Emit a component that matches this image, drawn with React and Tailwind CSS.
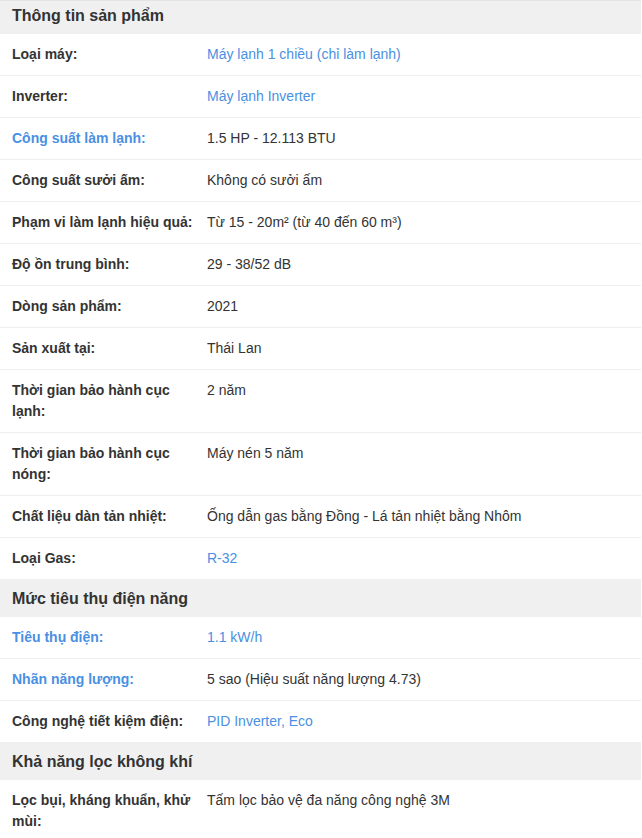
const sections = [
  {
    title: "Thông tin sản phẩm",
    first: true,
    rows: [
      { label: "Loại máy:", value: "Máy lạnh 1 chiều (chỉ làm lạnh)", valueLink: true },
      { label: "Inverter:", value: "Máy lạnh Inverter", valueLink: true },
      { label: "Công suất làm lạnh:", labelLink: true, value: "1.5 HP - 12.113 BTU" },
      { label: "Công suất sưởi ấm:", value: "Không có sưởi ấm" },
      { label: "Phạm vi làm lạnh hiệu quả:", value: "Từ 15 - 20m² (từ 40 đến 60 m³)" },
      { label: "Độ ồn trung bình:", value: "29 - 38/52 dB" },
      { label: "Dòng sản phẩm:", value: "2021" },
      { label: "Sản xuất tại:", value: "Thái Lan" },
      { label: "Thời gian bảo hành cục lạnh:", value: "2 năm" },
      { label: "Thời gian bảo hành cục nóng:", value: "Máy nén 5 năm" },
      { label: "Chất liệu dàn tản nhiệt:", value: "Ống dẫn gas bằng Đồng - Lá tản nhiệt bằng Nhôm" },
      { label: "Loại Gas:", value: "R-32", valueLink: true },
    ],
  },
  {
    title: "Mức tiêu thụ điện năng",
    rows: [
      { label: "Tiêu thụ điện:", labelLink: true, value: "1.1 kW/h", valueLink: true },
      { label: "Nhãn năng lượng:", labelLink: true, value: "5 sao (Hiệu suất năng lượng 4.73)" },
      { label: "Công nghệ tiết kiệm điện:", value: "PID Inverter, Eco", valueLink: true },
    ],
  },
  {
    title: "Khả năng lọc không khí",
    rows: [
      { label: "Lọc bụi, kháng khuẩn, khử mùi:", value: "Tấm lọc bảo vệ đa năng công nghệ 3M", last: true },
    ],
  },
];

function SpecRow({ row }) {
  return (
    <div className={"flex pt-[10px] pb-[10px] " + (row.last ? "" : "border-b border-[#eeeeee]")}>
      <div
        className={
          "w-[207px] shrink-0 pl-3 pr-1 font-bold leading-[21px] " +
          (row.labelLink ? "text-[#4a90e2]" : "text-[#333333]")
        }
      >
        {row.label}
      </div>
      <div
        className={
          "flex-1 pr-3 leading-[21px] " + (row.valueLink ? "text-[#4a90e2]" : "text-[#333333]")
        }
      >
        {row.value}
      </div>
    </div>
  );
}

export default function App() {
  return (
    <div className="w-[641px] bg-white font-['Liberation_Sans',Arial,sans-serif] text-[14px]">
      <div className="h-px bg-[#e4e4e4]" />
      {sections.map((s) => (
        <div key={s.title}>
          <h3
            className={
              "bg-[#f0f0f0] px-3 text-[16px] font-bold text-[#333333] " +
              (s.first ? "pt-[4px] pb-[8px] leading-[21px]" : "pt-[8px] pb-[8px] leading-[21px]")
            }
          >
            {s.title}
          </h3>
          {s.rows.map((r) => (
            <SpecRow key={r.label} row={r} />
          ))}
        </div>
      ))}
    </div>
  );
}
